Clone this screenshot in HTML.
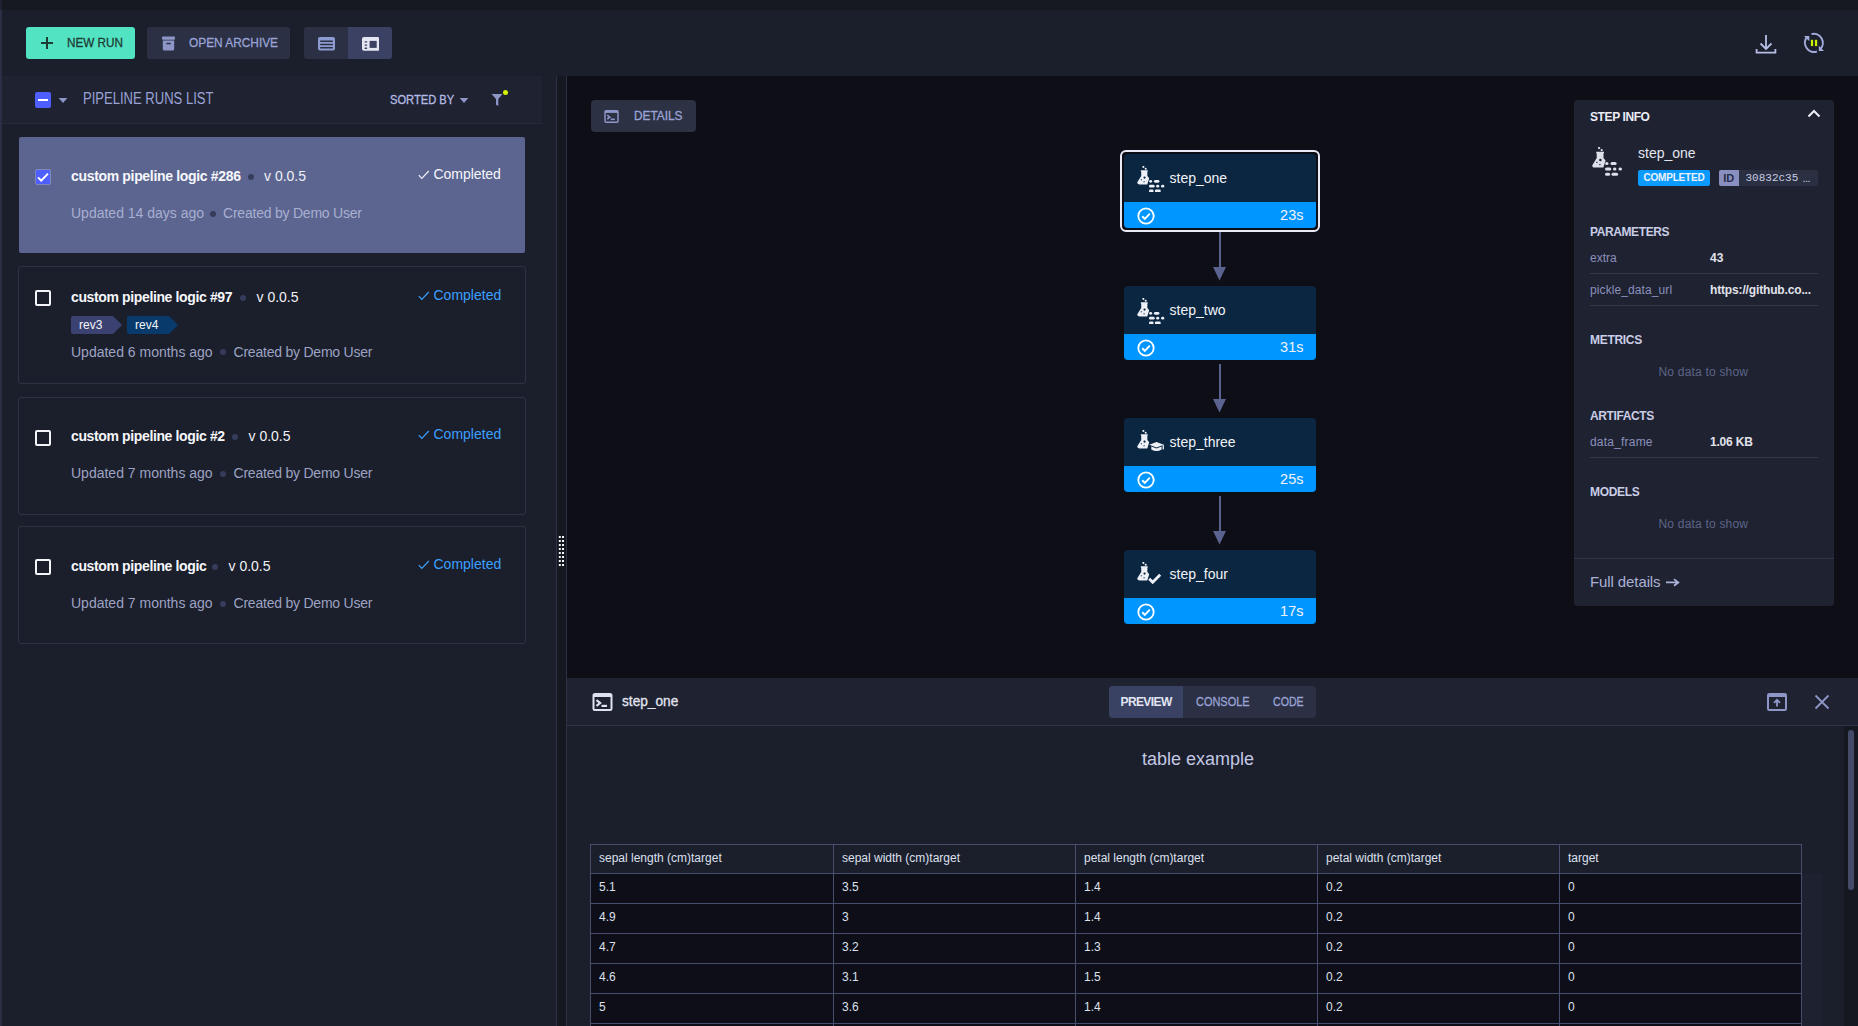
<!DOCTYPE html>
<html><head><meta charset="utf-8">
<style>
*{box-sizing:border-box;margin:0;padding:0}
html,body{width:1858px;height:1026px;overflow:hidden;background:#1b1e2b;font-family:"Liberation Sans",sans-serif}
.a{position:absolute}
.t{position:absolute;line-height:1;white-space:nowrap}
</style></head><body>
<svg width="0" height="0" style="position:absolute">
<defs>
<symbol id="flask" viewBox="0 0 14 21">
<circle cx="7.1" cy="1.1" r="1.15" fill="currentColor"/>
<circle cx="9.7" cy="3.1" r="1.15" fill="currentColor"/>
<path fill="currentColor" d="M4.2 4.8H12V6.2H11.5V11L13.6 13.6L11.4 20.6H2.6Q0 20.6 0.3 18.2L4.7 11V6.2H4.2Z"/>
<circle cx="8.4" cy="12.9" r="1.25" fill="var(--h,#0b2640)" class="hole"/>
<ellipse cx="4.9" cy="15.3" rx="0.8" ry="0.6" fill="var(--h,#0b2640)" class="hole"/>
<ellipse cx="7.9" cy="17.6" rx="0.8" ry="0.6" fill="var(--h,#0b2640)" class="hole"/>
</symbol>
<symbol id="dashes" viewBox="0 0 18 14">
<g fill="currentColor">
<rect x="0.2" y="0" width="3.3" height="3" rx="1.5"/>
<rect x="5.5" y="0" width="6.1" height="3" rx="1.5"/>
<rect x="0" y="5.4" width="6.3" height="3" rx="1.5"/>
<rect x="8" y="5.4" width="3.4" height="3" rx="1.5"/>
<rect x="13.5" y="5.4" width="3.5" height="3" rx="1.5"/>
<rect x="0" y="10.7" width="5.1" height="3" rx="1.5"/>
<rect x="6.5" y="10.7" width="6.6" height="3" rx="1.5"/>
</g>
</symbol>
<symbol id="term" viewBox="0 0 20 18">
<rect x="1" y="1" width="18" height="16" rx="1.5" fill="none" stroke="currentColor" stroke-width="2"/>
<rect x="1" y="1" width="18" height="3" fill="currentColor"/>
<path d="M4 7.2L7.6 10L4 12.8" fill="none" stroke="currentColor" stroke-width="2.2"/>
<rect x="9" y="11.8" width="5.5" height="2.2" fill="currentColor"/>
</symbol>
<symbol id="chk" viewBox="0 0 18 18">
<circle cx="9" cy="9" r="7.7" fill="none" stroke="currentColor" stroke-width="1.8"/>
<path d="M5.2 9.3L7.8 11.8L12.8 6.6" fill="none" stroke="currentColor" stroke-width="1.9"/>
</symbol>
</defs>
</svg>

<!-- top band -->
<div class="a" style="left:0;top:0;width:1858px;height:10px;background:#171922"></div>
<div class="a" style="left:0;top:10px;width:2px;height:1016px;background:#2b2f45"></div>
<div class="a" style="left:0;top:0;width:2px;height:10px;background:#1f2232"></div>

<!-- toolbar -->
<div class="a" style="left:26px;top:27px;width:109px;height:32px;background:#52e3c2;border-radius:3px"></div>
<div class="a" style="left:41px;top:42px;width:12px;height:2.2px;background:#1e3a34"></div>
<div class="a" style="left:45.9px;top:37px;width:2.2px;height:12px;background:#1e3a34"></div>
<div class="t" style="left:67.3px;top:35.9px;font-size:13px;color:#1e3a34;-webkit-text-stroke:0.3px currentColor;transform-origin:0 0;transform:scaleX(0.9)">NEW RUN</div>

<div class="a" style="left:147px;top:27px;width:143px;height:32px;background:#2b3044;border-radius:3px"></div>
<svg class="a" style="left:161px;top:36px" width="15" height="15" viewBox="0 0 15 15"><rect x="1" y="0.5" width="13" height="3.3" rx="1" fill="#8e96c8"/><path d="M1.8 4.6H13.2V13Q13.2 14.5 11.7 14.5H3.3Q1.8 14.5 1.8 13Z" fill="#8e96c8"/><rect x="5.3" y="6.8" width="4.4" height="1.5" fill="#2b3044"/></svg>
<div class="t" style="left:188.7px;top:35.9px;font-size:13px;color:#9aa3d6;-webkit-text-stroke:0.3px currentColor;transform-origin:0 0;transform:scaleX(0.913)">OPEN ARCHIVE</div>

<div class="a" style="left:304px;top:27px;width:88px;height:32px;background:#2b3044;border-radius:3px;overflow:hidden"><div class="a" style="left:44px;top:0;width:44px;height:32px;background:#3a4162"></div></div>
<svg class="a" style="left:318px;top:37px" width="17" height="14" viewBox="0 0 17 14"><rect x="0" y="0" width="17" height="13.6" rx="2" fill="#8e9bd0"/><rect x="2" y="3.5" width="13" height="1.4" rx="0.7" fill="#2b3044"/><rect x="2" y="6.75" width="13" height="1.4" rx="0.7" fill="#2b3044"/><rect x="2" y="10.1" width="13" height="1.4" rx="0.7" fill="#2b3044"/></svg>
<svg class="a" style="left:361.5px;top:37px" width="17.5" height="14" viewBox="0 0 17.5 14"><rect x="0" y="0" width="17.5" height="13.7" rx="2" fill="#e4e6f2"/><rect x="2.5" y="4.3" width="2.8" height="1.3" rx="0.6" fill="#3a4162"/><rect x="2.5" y="7.4" width="2.8" height="1.3" rx="0.6" fill="#3a4162"/><rect x="2.5" y="10.6" width="2.8" height="1.3" rx="0.6" fill="#3a4162"/><rect x="7.6" y="3.9" width="7.1" height="7" fill="#3a4162"/></svg>

<!-- top right icons -->
<svg class="a" style="left:1754px;top:33px" width="24" height="22" viewBox="0 0 24 22"><path d="M12 2V15.5M6.5 10.5L12 16L17.5 10.5" fill="none" stroke="#b6bee6" stroke-width="1.8"/><path d="M2.6 16V19.6H21.4V16" fill="none" stroke="#b6bee6" stroke-width="1.8"/></svg>
<svg class="a" style="left:1800px;top:29px" width="28" height="28" viewBox="0 0 28 28"><path d="M6.9 8.2A9.1 9.1 0 0 0 16.9 22.45" fill="none" stroke="#a3abdc" stroke-width="2"/><path d="M4 7.1H9.3V12.3Z" fill="#a3abdc"/><path d="M11.44 5.11A9.1 9.1 0 0 1 20.4 20.1" fill="none" stroke="#a3abdc" stroke-width="2"/><path d="M18.8 16.8V22H24Z" fill="#a3abdc"/><rect x="10.9" y="10.8" width="2.2" height="6.3" fill="#c8f000"/><rect x="14.9" y="10.8" width="2.3" height="6.3" fill="#c8f000"/></svg>

<!-- left panel header -->
<div class="a" style="left:2px;top:76px;width:540px;height:48px;background:#1f2230;border-bottom:1px solid #262a3a"></div>
<div class="a" style="left:35px;top:92px;width:16px;height:16px;background:#4f5fff;border-radius:2px"></div>
<div class="a" style="left:38px;top:99px;width:10px;height:2.2px;background:#fff"></div>
<svg class="a" style="left:58px;top:97px" width="10" height="7" viewBox="0 0 10 7"><path d="M0.6 1H9.4L5 6Z" fill="#8e96c8"/></svg>
<div class="t" style="left:83px;top:90.8px;font-size:16px;color:#9aa3d6;transform:scaleX(0.815);transform-origin:0 0">PIPELINE RUNS LIST</div>
<div class="t" style="left:389.5px;top:94px;font-size:12px;color:#b4bbe3;-webkit-text-stroke:0.3px currentColor;transform-origin:0 0;transform:scaleX(0.929)">SORTED BY</div>
<svg class="a" style="left:458.5px;top:97px" width="10" height="7" viewBox="0 0 10 7"><path d="M0.6 1H9.4L5 6Z" fill="#8e96c8"/></svg>
<svg class="a" style="left:491px;top:93px" width="12" height="14" viewBox="0 0 12 14"><path d="M0.5 1H11.5L7.3 6V13L5 11.8V6Z" fill="#8e96c8"/></svg>
<div class="a" style="left:503px;top:90px;width:5px;height:5px;border-radius:50%;background:#d5f000"></div>

<!-- divider -->
<div class="a" style="left:556px;top:76px;width:11px;height:950px;background:#161821;border-left:1px solid #2c3146;border-right:1px solid #2c3146"></div>
<svg class="a" style="left:558px;top:535px" width="8" height="32" viewBox="0 0 8 32"><rect x="0.8" y="1" width="2" height="2" fill="#f4f4f4"/><rect x="4" y="1" width="2" height="2" fill="#f4f4f4"/><rect x="0.8" y="5" width="2" height="2" fill="#f4f4f4"/><rect x="4" y="5" width="2" height="2" fill="#f4f4f4"/><rect x="0.8" y="9" width="2" height="2" fill="#f4f4f4"/><rect x="4" y="9" width="2" height="2" fill="#f4f4f4"/><rect x="0.8" y="13" width="2" height="2" fill="#f4f4f4"/><rect x="4" y="13" width="2" height="2" fill="#f4f4f4"/><rect x="0.8" y="17" width="2" height="2" fill="#f4f4f4"/><rect x="4" y="17" width="2" height="2" fill="#f4f4f4"/><rect x="0.8" y="21" width="2" height="2" fill="#f4f4f4"/><rect x="4" y="21" width="2" height="2" fill="#f4f4f4"/><rect x="0.8" y="25" width="2" height="2" fill="#f4f4f4"/><rect x="4" y="25" width="2" height="2" fill="#f4f4f4"/><rect x="0.8" y="29" width="2" height="2" fill="#f4f4f4"/><rect x="4" y="29" width="2" height="2" fill="#f4f4f4"/></svg>

<!-- cards -->

<!-- card 1 selected -->
<div class="a" style="left:18.5px;top:136.5px;width:506.5px;height:116.5px;background:#5b6590;border-radius:2px"></div>
<div class="a" style="left:35px;top:169px;width:16px;height:16px;background:#4f5fff;border:1px solid #7f88bd;border-radius:2px"></div>
<svg class="a" style="left:35px;top:169px" width="16" height="16" viewBox="0 0 16 16"><path d="M3 8.4L6.2 11.6L13 4.6" fill="none" stroke="#fff" stroke-width="2"/></svg>
<div class="t" style="left:71px;top:168.5px;font-size:14px;font-weight:700;color:#f6f7fb;letter-spacing:-0.33px">custom pipeline logic #286</div>
<div class="a" style="left:247.5px;top:174.2px;width:6px;height:6px;border-radius:50%;background:#363c5c"></div>
<div class="t" style="left:264px;top:168.5px;font-size:14px;color:#f0f1f6">v 0.0.5</div>
<svg class="a" style="left:418px;top:170px" width="12" height="10" viewBox="0 0 12 10"><path d="M0.8 5.2L3.8 8.4L10.8 1" fill="none" stroke="#f0f1f6" stroke-width="1.2"/></svg>
<div class="t" style="left:433.5px;top:167.3px;font-size:14px;color:#f6f7fb;letter-spacing:-0.05px">Completed</div>
<div class="t" style="left:71px;top:205.8px;font-size:14px;color:#a9afd0">Updated 14 days ago</div>
<div class="a" style="left:209.5px;top:211px;width:6px;height:6px;border-radius:50%;background:#363c5c"></div>
<div class="t" style="left:223px;top:205.8px;font-size:14px;color:#a9afd0;letter-spacing:-0.22px">Created by Demo User</div>

<!-- card 2 -->
<div class="a" style="left:18px;top:266px;width:508px;height:118px;border:1px solid #2e3245;border-radius:3px"></div>
<div class="a" style="left:35px;top:290px;width:16px;height:16px;border:2px solid #f4f5f9;border-radius:2px"></div>
<div class="t" style="left:71px;top:290px;font-size:14px;font-weight:700;color:#f6f7fb;letter-spacing:-0.37px">custom pipeline logic #97</div>
<div class="a" style="left:240px;top:295px;width:6px;height:6px;border-radius:50%;background:#363c5c"></div>
<div class="t" style="left:256.5px;top:290px;font-size:14px;color:#f0f1f6">v 0.0.5</div>
<svg class="a" style="left:418px;top:291px" width="12" height="10" viewBox="0 0 12 10"><path d="M0.8 5.2L3.8 8.4L10.8 1" fill="none" stroke="#3ba0ff" stroke-width="1.2"/></svg>
<div class="t" style="left:433.5px;top:287.9px;font-size:14px;color:#3ba0ff">Completed</div>
<svg class="a" style="left:71px;top:316px" width="110" height="18" viewBox="0 0 110 18"><path d="M2 0H42L51 9L42 18H2Q0 18 0 16V2Q0 0 2 0Z" fill="#3b4272"/><path d="M58 0H98L107 9L98 18H58Q56 18 56 16V2Q56 0 58 0Z" fill="#083a6b"/></svg>
<div class="t" style="left:79px;top:319px;font-size:12px;color:#f4f5fa">rev3</div>
<div class="t" style="left:135px;top:319px;font-size:12px;color:#f4f5fa">rev4</div>
<div class="t" style="left:71px;top:344.8px;font-size:14px;color:#9da3c2">Updated 6 months ago</div>
<div class="a" style="left:220px;top:349px;width:6px;height:6px;border-radius:50%;background:#363c5c"></div>
<div class="t" style="left:233.5px;top:344.8px;font-size:14px;color:#9da3c2;letter-spacing:-0.22px">Created by Demo User</div>

<!-- card 3 -->
<div class="a" style="left:18px;top:396.5px;width:508px;height:118px;border:1px solid #2e3245;border-radius:3px"></div>
<div class="a" style="left:35px;top:429.5px;width:16px;height:16px;border:2px solid #f4f5f9;border-radius:2px"></div>
<div class="t" style="left:71px;top:429px;font-size:14px;font-weight:700;color:#f6f7fb;letter-spacing:-0.37px">custom pipeline logic #2</div>
<div class="a" style="left:232px;top:434px;width:6px;height:6px;border-radius:50%;background:#363c5c"></div>
<div class="t" style="left:248.5px;top:429px;font-size:14px;color:#f0f1f6">v 0.0.5</div>
<svg class="a" style="left:418px;top:430px" width="12" height="10" viewBox="0 0 12 10"><path d="M0.8 5.2L3.8 8.4L10.8 1" fill="none" stroke="#3ba0ff" stroke-width="1.2"/></svg>
<div class="t" style="left:433.5px;top:427px;font-size:14px;color:#3ba0ff">Completed</div>
<div class="t" style="left:71px;top:465.8px;font-size:14px;color:#9da3c2">Updated 7 months ago</div>
<div class="a" style="left:220px;top:471px;width:6px;height:6px;border-radius:50%;background:#363c5c"></div>
<div class="t" style="left:233.5px;top:465.8px;font-size:14px;color:#9da3c2;letter-spacing:-0.22px">Created by Demo User</div>

<!-- card 4 -->
<div class="a" style="left:18px;top:526px;width:508px;height:118px;border:1px solid #2e3245;border-radius:3px"></div>
<div class="a" style="left:35px;top:559px;width:16px;height:16px;border:2px solid #f4f5f9;border-radius:2px"></div>
<div class="t" style="left:71px;top:559px;font-size:14px;font-weight:700;color:#f6f7fb;letter-spacing:-0.37px">custom pipeline logic</div>
<div class="a" style="left:212px;top:564px;width:6px;height:6px;border-radius:50%;background:#363c5c"></div>
<div class="t" style="left:228.5px;top:559px;font-size:14px;color:#f0f1f6">v 0.0.5</div>
<svg class="a" style="left:418px;top:560px" width="12" height="10" viewBox="0 0 12 10"><path d="M0.8 5.2L3.8 8.4L10.8 1" fill="none" stroke="#3ba0ff" stroke-width="1.2"/></svg>
<div class="t" style="left:433.5px;top:556.8px;font-size:14px;color:#3ba0ff">Completed</div>
<div class="t" style="left:71px;top:595.6px;font-size:14px;color:#9da3c2">Updated 7 months ago</div>
<div class="a" style="left:220px;top:601px;width:6px;height:6px;border-radius:50%;background:#363c5c"></div>
<div class="t" style="left:233.5px;top:595.6px;font-size:14px;color:#9da3c2;letter-spacing:-0.22px">Created by Demo User</div>


<!-- canvas -->
<div class="a" style="left:567px;top:76px;width:1291px;height:602px;background:#0d0e16"></div>


<!-- details button -->
<div class="a" style="left:591px;top:100px;width:105px;height:32px;background:#2c3144;border-radius:4px"></div>
<svg class="a" style="left:604px;top:110px;color:#8e96c8" width="15" height="13"><use href="#term"/></svg>
<div class="t" style="left:633.9px;top:110px;font-size:12px;color:#9aa3d6;-webkit-text-stroke:0.3px currentColor;transform-origin:0 0;transform:scaleX(0.986)">DETAILS</div>
<div class="a" style="left:1120px;top:150px;width:200px;height:82px;border:2px solid #e8eaf6;border-radius:6px"></div>
<div class="a" style="left:1124px;top:154px;width:192px;height:74px;background:#0b2640;border-radius:4px;overflow:hidden"><div class="a" style="left:0;top:48px;width:192px;height:26px;background:#0096ff"></div></div>
<svg class="a" style="left:1137px;top:166px;color:#eef0f8" width="12.6" height="18.9"><use href="#flask"/></svg>
<svg class="a" style="left:1149px;top:179.5px;color:#eef0f8" width="16.2" height="12.6"><use href="#dashes"/></svg>
<div class="t" style="left:1169.5px;top:171.4px;font-size:14px;color:#f2f3f8">step_one</div>
<svg class="a" style="left:1136.6px;top:206.5px;color:#fff" width="18" height="18"><use href="#chk"/></svg>
<div class="t" style="right:554.5px;top:207.6px;font-size:14.5px;color:#f2f3f8">23s</div>
<div class="a" style="left:1219px;top:232px;width:2px;height:38px;background:#5a6390"></div>
<svg class="a" style="left:1213.2px;top:267.4px" width="13" height="14" viewBox="0 0 13 14"><path d="M0 0H13L6.5 13.5Z" fill="#5a6390"/></svg>
<div class="a" style="left:1124px;top:286px;width:192px;height:74px;background:#0b2640;border-radius:4px;overflow:hidden"><div class="a" style="left:0;top:48px;width:192px;height:26px;background:#0096ff"></div></div>
<svg class="a" style="left:1137px;top:298px;color:#eef0f8" width="12.6" height="18.9"><use href="#flask"/></svg>
<svg class="a" style="left:1149px;top:311.5px;color:#eef0f8" width="16.2" height="12.6"><use href="#dashes"/></svg>
<div class="t" style="left:1169.5px;top:303.4px;font-size:14px;color:#f2f3f8">step_two</div>
<svg class="a" style="left:1136.6px;top:338.5px;color:#fff" width="18" height="18"><use href="#chk"/></svg>
<div class="t" style="right:554.5px;top:339.6px;font-size:14.5px;color:#f2f3f8">31s</div>
<div class="a" style="left:1219px;top:364px;width:2px;height:38px;background:#5a6390"></div>
<svg class="a" style="left:1213.2px;top:399.4px" width="13" height="14" viewBox="0 0 13 14"><path d="M0 0H13L6.5 13.5Z" fill="#5a6390"/></svg>
<div class="a" style="left:1124px;top:418px;width:192px;height:74px;background:#0b2640;border-radius:4px;overflow:hidden"><div class="a" style="left:0;top:48px;width:192px;height:26px;background:#0096ff"></div></div>
<svg class="a" style="left:1137px;top:430px;color:#eef0f8" width="12.6" height="18.9"><use href="#flask"/></svg>
<svg class="a" style="left:1149px;top:442px" width="16" height="10" viewBox="0 0 16 10"><path d="M0.3 2.7L7.5 0L14.8 2.7L7.5 5.4Z" fill="#eef0f8"/><path d="M2.3 4.5V7.5Q7.5 10.5 12.6 7.5V4.5L7.5 6.4Z" fill="#eef0f8"/><rect x="13.6" y="2.8" width="1.3" height="4.6" fill="#eef0f8"/></svg>
<div class="t" style="left:1169.5px;top:435.4px;font-size:14px;color:#f2f3f8">step_three</div>
<svg class="a" style="left:1136.6px;top:470.5px;color:#fff" width="18" height="18"><use href="#chk"/></svg>
<div class="t" style="right:554.5px;top:471.6px;font-size:14.5px;color:#f2f3f8">25s</div>
<div class="a" style="left:1219px;top:496px;width:2px;height:38px;background:#5a6390"></div>
<svg class="a" style="left:1213.2px;top:531.4px" width="13" height="14" viewBox="0 0 13 14"><path d="M0 0H13L6.5 13.5Z" fill="#5a6390"/></svg>
<div class="a" style="left:1124px;top:550px;width:192px;height:74px;background:#0b2640;border-radius:4px;overflow:hidden"><div class="a" style="left:0;top:48px;width:192px;height:26px;background:#0096ff"></div></div>
<svg class="a" style="left:1137px;top:562px;color:#eef0f8" width="12.6" height="18.9"><use href="#flask"/></svg>
<svg class="a" style="left:1148px;top:573px" width="14" height="12" viewBox="0 0 14 12"><path d="M1.2 5.8L4.7 9.2L12.2 1.8" fill="none" stroke="#eef0f8" stroke-width="2.8"/></svg>
<div class="t" style="left:1169.5px;top:567.4px;font-size:14px;color:#f2f3f8">step_four</div>
<svg class="a" style="left:1136.6px;top:602.5px;color:#fff" width="18" height="18"><use href="#chk"/></svg>
<div class="t" style="right:554.5px;top:603.6px;font-size:14.5px;color:#f2f3f8">17s</div>

<div class="a" style="left:1574px;top:100px;width:260px;height:506px;background:#1f2231;border-radius:4px"></div>
<div class="t" style="left:1590px;top:111.2px;font-size:12px;font-weight:700;color:#eceef6;letter-spacing:-0.4px">STEP INFO</div>
<svg class="a" style="left:1807px;top:108px" width="14" height="10" viewBox="0 0 14 10"><path d="M1.5 8.5L7 3L12.5 8.5" fill="none" stroke="#eceef6" stroke-width="2"/></svg>
<svg class="a" style="left:1592px;top:147px;color:#dcdfea;--h:#1f2231" width="14" height="21"><use href="#flask"/></svg>
<svg class="a" style="left:1605.4px;top:161.7px;color:#dcdfea" width="18" height="14"><use href="#dashes"/></svg>
<div class="t" style="left:1638px;top:145.9px;font-size:14px;color:#e4e6ef">step_one</div>
<div class="a" style="left:1638px;top:170px;width:72px;height:16px;background:#0b9bff;border-radius:2px"></div>
<div class="t" style="left:1643.5px;top:173.2px;font-size:10px;font-weight:700;color:#eef2fb;letter-spacing:-0.2px">COMPLETED</div>
<div class="a" style="left:1719px;top:170px;width:99px;height:16px;background:#2a2f42;border-radius:2px;overflow:hidden"><div class="a" style="left:0;top:0;width:20px;height:16px;background:#8990c0"></div></div>
<div class="t" style="left:1723.3px;top:172.6px;font-size:11px;font-weight:700;color:#262b48">ID</div>
<div class="t" style="left:1745.5px;top:172.8px;font-size:11px;font-family:'Liberation Mono',monospace;color:#c8cce2">30832c35</div><div class="t" style="left:1802.5px;top:172.8px;font-size:11px;color:#c8cce2;letter-spacing:-0.6px">...</div>

<div class="t" style="left:1590px;top:225.8px;font-size:12px;font-weight:700;color:#c9cde6;letter-spacing:-0.4px">PARAMETERS</div>
<div class="t" style="left:1590px;top:251.9px;font-size:12px;color:#8a91bc">extra</div>
<div class="t" style="left:1710px;top:251.9px;font-size:12px;font-weight:700;color:#e1e3ec">43</div>
<div class="a" style="left:1590px;top:273px;width:228px;height:1px;background:#33384b"></div>
<div class="t" style="left:1590px;top:283.8px;font-size:12px;color:#8a91bc;letter-spacing:0.1px">pickle_data_url</div>
<div class="t" style="left:1710px;top:283.8px;font-size:12px;font-weight:700;color:#e1e3ec;letter-spacing:-0.15px">https://github.co...</div>
<div class="a" style="left:1590px;top:305px;width:228px;height:1px;background:#33384b"></div>

<div class="t" style="left:1590px;top:333.9px;font-size:12px;font-weight:700;color:#c9cde6;letter-spacing:-0.3px">METRICS</div>
<div class="t" style="left:1658.5px;top:365.7px;font-size:12px;color:#5d6488;letter-spacing:0.2px">No data to show</div>
<div class="t" style="left:1590px;top:410.1px;font-size:12px;font-weight:700;color:#c9cde6;letter-spacing:-0.4px">ARTIFACTS</div>
<div class="t" style="left:1590px;top:435.8px;font-size:12px;color:#8a91bc;letter-spacing:0.2px">data_frame</div>
<div class="t" style="left:1710px;top:435.8px;font-size:12px;font-weight:700;color:#e1e3ec;letter-spacing:-0.2px">1.06 KB</div>
<div class="a" style="left:1590px;top:457px;width:228px;height:1px;background:#33384b"></div>
<div class="t" style="left:1590px;top:485.6px;font-size:12px;font-weight:700;color:#c9cde6;letter-spacing:-0.3px">MODELS</div>
<div class="t" style="left:1658.5px;top:517.9px;font-size:12px;color:#5d6488;letter-spacing:0.2px">No data to show</div>
<div class="a" style="left:1574px;top:558px;width:260px;height:1px;background:#2f3446"></div>
<div class="t" style="left:1590px;top:574.1px;font-size:15px;color:#aab1d6;letter-spacing:-0.1px">Full details</div><svg class="a" style="left:1665px;top:578px" width="15" height="9" viewBox="0 0 15 9"><path d="M1 4.4H13.3M9 1.1L13.3 4.4L9 7.7" fill="none" stroke="#aab1d8" stroke-width="1.8"/></svg>

<div class="a" style="left:567px;top:678px;width:1291px;height:48px;background:#1f2231;border-bottom:1px solid #2f3447"></div>
<svg class="a" style="left:592px;top:693px;color:#dfe2ef" width="21" height="18"><use href="#term"/></svg>
<div class="t" style="left:621.7px;top:693.8px;font-size:14px;color:#e2e5f0;-webkit-text-stroke:0.3px currentColor;transform-origin:0 0;transform:scaleX(0.977)">step_one</div>
<div class="a" style="left:1109px;top:686px;width:207px;height:32px;background:#2b3044;border-radius:4px;overflow:hidden"><div class="a" style="left:0;top:0;width:74px;height:32px;background:#3a4263"></div></div>
<div class="t" style="left:1120.5px;top:695.8px;font-size:12px;font-weight:700;color:#e2e5f2;letter-spacing:-0.6px">PREVIEW</div>
<div class="t" style="left:1195.6px;top:695.8px;font-size:12px;color:#9aa3d6;-webkit-text-stroke:0.3px currentColor;transform-origin:0 0;transform:scaleX(0.913)">CONSOLE</div>
<div class="t" style="left:1273px;top:695.8px;font-size:12px;color:#9aa3d6;-webkit-text-stroke:0.3px currentColor;transform-origin:0 0;transform:scaleX(0.885)">CODE</div>
<svg class="a" style="left:1767px;top:693px" width="20" height="18" viewBox="0 0 20 18"><rect x="1" y="1" width="18" height="16" rx="1.3" fill="none" stroke="#8e96c8" stroke-width="2"/><rect x="1" y="1" width="18" height="3" fill="#8e96c8"/><path d="M10 7V13.5M7 9.8L10 6.8L13 9.8" fill="none" stroke="#8e96c8" stroke-width="1.8"/></svg>
<svg class="a" style="left:1814px;top:694px" width="16" height="16" viewBox="0 0 16 16"><path d="M1.5 1.5L14.5 14.5M14.5 1.5L1.5 14.5" fill="none" stroke="#8e96c8" stroke-width="1.8"/></svg>

<div class="a" style="left:1844px;top:726px;width:14px;height:300px;background:#161821"></div>
<div class="a" style="left:1848px;top:730px;width:6px;height:160px;background:#444a6a;border-radius:3px"></div>
<div class="t" style="left:1142px;top:749.7px;font-size:18px;color:#c3c8e4">table example</div>
<div class="a" style="left:1802px;top:874px;width:20px;height:152px;background:#1e2130"></div>
<div class="a" style="left:590px;top:844px;width:1212px;height:30px;background:#1b1e2b"></div>
<div class="a" style="left:590px;top:874px;width:1212px;height:152px;background:#0d0e17"></div>
<div class="a" style="left:590px;top:844px;width:1212px;height:1px;background:#474d6e"></div>
<div class="a" style="left:590px;top:873px;width:1212px;height:1px;background:#474d6e"></div>
<div class="a" style="left:590px;top:903px;width:1212px;height:1px;background:#474d6e"></div>
<div class="a" style="left:590px;top:933px;width:1212px;height:1px;background:#474d6e"></div>
<div class="a" style="left:590px;top:963px;width:1212px;height:1px;background:#474d6e"></div>
<div class="a" style="left:590px;top:993px;width:1212px;height:1px;background:#474d6e"></div>
<div class="a" style="left:590px;top:1023px;width:1212px;height:1px;background:#474d6e"></div>
<div class="a" style="left:590px;top:844px;width:1px;height:182px;background:#474d6e"></div>
<div class="a" style="left:833px;top:844px;width:1px;height:182px;background:#474d6e"></div>
<div class="a" style="left:1075px;top:844px;width:1px;height:182px;background:#474d6e"></div>
<div class="a" style="left:1317px;top:844px;width:1px;height:182px;background:#474d6e"></div>
<div class="a" style="left:1559px;top:844px;width:1px;height:182px;background:#474d6e"></div>
<div class="a" style="left:1801px;top:844px;width:1px;height:182px;background:#474d6e"></div>
<div class="t" style="left:599px;top:851.9px;font-size:12px;color:#dde0ee">sepal length (cm)target</div>
<div class="t" style="left:842px;top:851.9px;font-size:12px;color:#dde0ee">sepal width (cm)target</div>
<div class="t" style="left:1084px;top:851.9px;font-size:12px;color:#dde0ee">petal length (cm)target</div>
<div class="t" style="left:1326px;top:851.9px;font-size:12px;color:#dde0ee">petal width (cm)target</div>
<div class="t" style="left:1568px;top:851.9px;font-size:12px;color:#dde0ee">target</div>
<div class="t" style="left:599px;top:881px;font-size:12px;color:#dde0ee">5.1</div>
<div class="t" style="left:842px;top:881px;font-size:12px;color:#dde0ee">3.5</div>
<div class="t" style="left:1084px;top:881px;font-size:12px;color:#dde0ee">1.4</div>
<div class="t" style="left:1326px;top:881px;font-size:12px;color:#dde0ee">0.2</div>
<div class="t" style="left:1568px;top:881px;font-size:12px;color:#dde0ee">0</div>
<div class="t" style="left:599px;top:911px;font-size:12px;color:#dde0ee">4.9</div>
<div class="t" style="left:842px;top:911px;font-size:12px;color:#dde0ee">3</div>
<div class="t" style="left:1084px;top:911px;font-size:12px;color:#dde0ee">1.4</div>
<div class="t" style="left:1326px;top:911px;font-size:12px;color:#dde0ee">0.2</div>
<div class="t" style="left:1568px;top:911px;font-size:12px;color:#dde0ee">0</div>
<div class="t" style="left:599px;top:941px;font-size:12px;color:#dde0ee">4.7</div>
<div class="t" style="left:842px;top:941px;font-size:12px;color:#dde0ee">3.2</div>
<div class="t" style="left:1084px;top:941px;font-size:12px;color:#dde0ee">1.3</div>
<div class="t" style="left:1326px;top:941px;font-size:12px;color:#dde0ee">0.2</div>
<div class="t" style="left:1568px;top:941px;font-size:12px;color:#dde0ee">0</div>
<div class="t" style="left:599px;top:971px;font-size:12px;color:#dde0ee">4.6</div>
<div class="t" style="left:842px;top:971px;font-size:12px;color:#dde0ee">3.1</div>
<div class="t" style="left:1084px;top:971px;font-size:12px;color:#dde0ee">1.5</div>
<div class="t" style="left:1326px;top:971px;font-size:12px;color:#dde0ee">0.2</div>
<div class="t" style="left:1568px;top:971px;font-size:12px;color:#dde0ee">0</div>
<div class="t" style="left:599px;top:1001px;font-size:12px;color:#dde0ee">5</div>
<div class="t" style="left:842px;top:1001px;font-size:12px;color:#dde0ee">3.6</div>
<div class="t" style="left:1084px;top:1001px;font-size:12px;color:#dde0ee">1.4</div>
<div class="t" style="left:1326px;top:1001px;font-size:12px;color:#dde0ee">0.2</div>
<div class="t" style="left:1568px;top:1001px;font-size:12px;color:#dde0ee">0</div>

</body></html>
